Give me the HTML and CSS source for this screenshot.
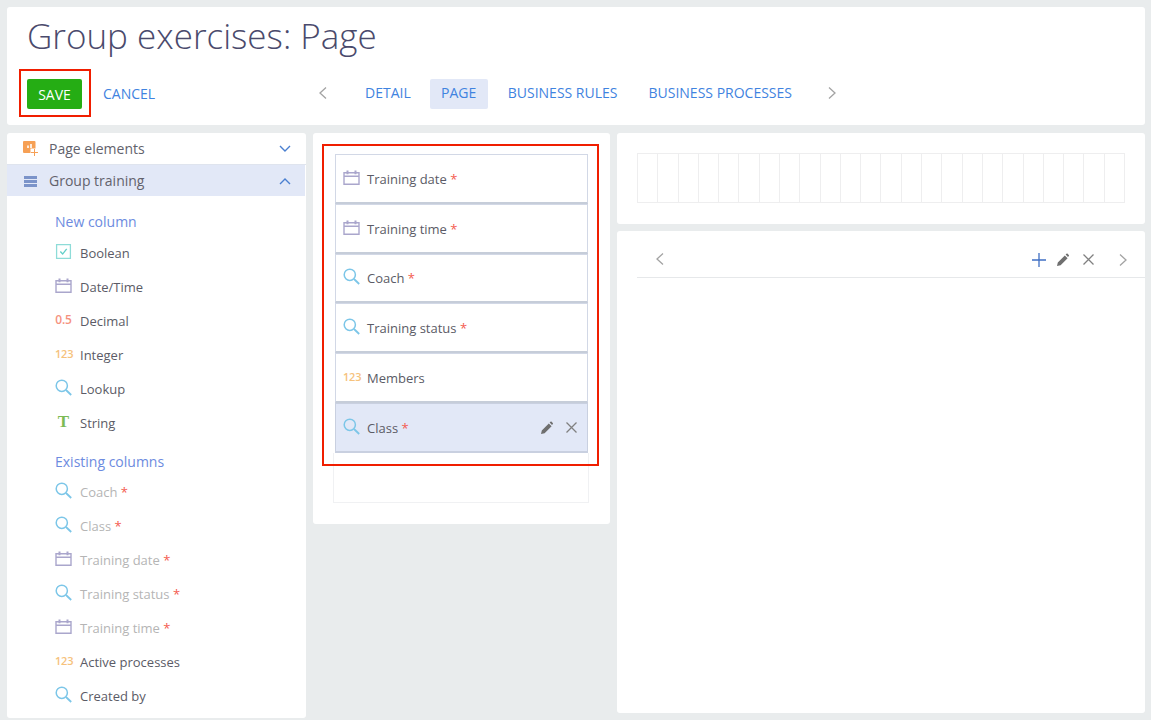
FILE: index.html
```html
<!DOCTYPE html>
<html lang="en">
<head>
<meta charset="utf-8">
<title>Group exercises: Page</title>
<link rel="stylesheet" href="styles.css">
</head>
<body>
<svg class="defs" width="0" height="0" aria-hidden="true">
  <symbol id="cal" viewBox="0 0 17 16"><path d="M1 3.2h15v11.6H1zM1 6.8h15" fill="none" stroke="#aaa6cc" stroke-width="1.4"/><path d="M4.5 1v3.8M12.5 1v3.8" stroke="#aaa6cc" stroke-width="2"/></symbol>
  <symbol id="mag" viewBox="0 0 17 17"><circle cx="6.8" cy="6.8" r="5.6" fill="none" stroke="#7cc6e8" stroke-width="1.5"/><path d="M11 11l5.2 5" stroke="#7cc6e8" stroke-width="1.8"/></symbol>
  <symbol id="pen" viewBox="0 0 14 14"><path d="M1 13l.8-3.6 7-7 2.8 2.8-7 7zM9.6 1.6l.9-.8c.4-.3.8-.3 1.1 0l1.2 1.2c.3.3.3.7 0 1.1l-.8.9z" fill="#6f6f6f"/></symbol>
  <symbol id="cross" viewBox="0 0 13 13"><path d="M1.5 1.5l10 10M11.5 1.5l-10 10" stroke="#808080" stroke-width="1.3" fill="none"/></symbol>
  <symbol id="left" viewBox="0 0 9 14"><path d="M8 1.5L2 7l6 5.5" fill="none" stroke="#a3a3a3" stroke-width="1.3"/></symbol>
  <symbol id="right" viewBox="0 0 9 14"><path d="M1 1.5L7 7l-6 5.5" fill="none" stroke="#a3a3a3" stroke-width="1.3"/></symbol>
</svg>

<div class="page">
  <header class="card head">
    <h1 class="title">Group exercises: Page</h1>
    <div class="toolbar">
      <button class="save">SAVE</button>
      <a class="cancel">CANCEL</a>
      <nav class="tabs">
        <svg class="arrow arrow-up"><use href="#left"/></svg>
        <a class="tab tab-detail">DETAIL</a>
        <a class="tab tab-on">PAGE</a>
        <a class="tab tab-rules">BUSINESS RULES</a>
        <a class="tab tab-proc">BUSINESS PROCESSES</a>
        <svg class="arrow arrow-up arrow-r"><use href="#right"/></svg>
      </nav>
    </div>
    <div class="mark mark-save"></div>
  </header>

  <div class="body">
    <aside class="card side">
      <div class="acc">
        <svg class="acc-ic" viewBox="0 0 16 16"><rect x="0" y="0" width="12.5" height="12" rx="1" fill="#f6a055"/><path d="M5 7V4.5M8 7V3" stroke="#fff" stroke-width="1.6"/><rect x="7.5" y="7.5" width="8" height="8" fill="#fff"/><path d="M11.5 8v7M8 11.5h7" stroke="#f6a055" stroke-width="1"/></svg>
        <span class="acc-t">Page elements</span>
        <svg class="chev" viewBox="0 0 12 8"><path d="M1 1l5 5 5-5" fill="none" stroke="#4a7fd0" stroke-width="1.4"/></svg>
      </div>
      <div class="acc acc-on">
        <svg class="acc-ic" viewBox="0 0 16 16"><path d="M1 3h13v3H1zM1 7h13v3H1zM1 11h13v3H1z" fill="#7b93c9"/></svg>
        <span class="acc-t">Group training</span>
        <svg class="chev" viewBox="0 0 12 8"><path d="M1 7l5-5 5 5" fill="none" stroke="#4a7fd0" stroke-width="1.4"/></svg>
      </div>

      <h3 class="sec sec-a">New column</h3>
      <ul class="list list-a">
        <li class="it"><svg class="ic" viewBox="0 0 16 16"><path d="M1.5 1.5h13v13h-13z" fill="none" stroke="#8edcd8" stroke-width="1.2"/><path d="M5 8l2.2 2.4L11 5.5" fill="none" stroke="#63cfc9" stroke-width="1.3"/></svg>Boolean</li>
        <li class="it"><svg class="ic"><use href="#cal"/></svg>Date/Time</li>
        <li class="it"><span class="ic num num-r">0.5</span>Decimal</li>
        <li class="it"><span class="ic num">123</span>Integer</li>
        <li class="it"><svg class="ic"><use href="#mag"/></svg>Lookup</li>
        <li class="it"><span class="ic tee">T</span>String</li>
      </ul>

      <h3 class="sec sec-b">Existing columns</h3>
      <ul class="list list-b">
        <li class="it off"><svg class="ic"><use href="#mag"/></svg>Coach <i class="req">*</i></li>
        <li class="it off"><svg class="ic"><use href="#mag"/></svg>Class <i class="req">*</i></li>
        <li class="it off"><svg class="ic"><use href="#cal"/></svg>Training date <i class="req">*</i></li>
        <li class="it off"><svg class="ic"><use href="#mag"/></svg>Training status <i class="req">*</i></li>
        <li class="it off"><svg class="ic"><use href="#cal"/></svg>Training time <i class="req">*</i></li>
        <li class="it"><span class="ic num">123</span>Active processes</li>
        <li class="it"><svg class="ic"><use href="#mag"/></svg>Created by</li>
      </ul>
    </aside>

    <main class="card mid">
      <div class="row"><svg class="ic"><use href="#cal"/></svg>Training date <i class="req">*</i></div>
      <div class="row"><svg class="ic"><use href="#cal"/></svg>Training time <i class="req">*</i></div>
      <div class="row"><svg class="ic"><use href="#mag"/></svg>Coach <i class="req">*</i></div>
      <div class="row"><svg class="ic"><use href="#mag"/></svg>Training status <i class="req">*</i></div>
      <div class="row"><span class="ic num">123</span>Members</div>
      <div class="row row-on"><svg class="ic"><use href="#mag"/></svg>Class <i class="req">*</i>
        <span class="row-act"><svg class="act-pen"><use href="#pen"/></svg><svg class="act-x"><use href="#cross"/></svg></span>
      </div>
      <div class="row-empty"></div>
      <div class="mark mark-rows"></div>
    </main>

    <section class="right">
      <div class="card grid-card">
        <div class="grid">
          <b></b><b></b><b></b><b></b><b></b><b></b><b></b><b></b><b></b><b></b><b></b><b></b>
          <b></b><b></b><b></b><b></b><b></b><b></b><b></b><b></b><b></b><b></b><b></b><b></b>
        </div>
      </div>
      <div class="card detail">
        <div class="detail-bar">
          <svg class="arrow arrow-prev"><use href="#left"/></svg>
          <svg class="plus" viewBox="0 0 14 14"><path d="M7 0v14M0 7h14" stroke="#3f6fc4" stroke-width="1.3"/></svg>
          <svg class="act-pen"><use href="#pen"/></svg>
          <svg class="act-x"><use href="#cross"/></svg>
          <svg class="arrow arrow-end"><use href="#right"/></svg>
        </div>
      </div>
    </section>
  </div>
</div>
</body>
</html>
```
FILE: styles.css
```css
* { box-sizing: border-box; }
html, body { margin: 0; height: 100%; overflow: hidden; }
body { background: #e9eced; font-family: "Open Sans", "Noto Sans", sans-serif; font-size: 13px; color: #5b5b66; }
.defs { position: absolute; }
.page { width: 1151px; height: 720px; padding: 7px 6px 0 7px; display: flex; flex-direction: column; gap: 8px; }
.card { background: #fff; border-radius: 3px; }
.head { position: relative; height: 118px; padding: 7px 20px 0; flex: none; }
.title { margin: 0; font-size: 35px; line-height: 44px; font-weight: 300; color: #4a4a6c; }
.toolbar { display: flex; align-items: center; margin-top: 21px; height: 30px; }
.save { width: 55px; height: 30px; border: 0; border-radius: 2px; background: #25ad14; color: #fff; font: 400 14px "Open Sans", sans-serif; padding: 0; flex: none; }
.cancel { margin-left: 21px; width: 52px; padding-bottom: 2px; color: #3f83e0; font-size: 14px; white-space: nowrap; }
.tabs { display: flex; align-items: center; margin-left: 163px; height: 30px; }
.arrow { width: 9px; height: 14px; flex: none; }
.arrow-up { margin-top: -2px; }
.tab { color: #3f83e0; font-size: 14px; line-height: 28px; padding-bottom: 2px; border-radius: 2px; white-space: nowrap; }
.tab-detail { margin-left: 38px; }
.tab-on { margin-left: 19px; width: 58px; text-align: center; background: #e2e8f7; }
.tab-rules { margin-left: 20px; }
.tab-proc { margin-left: 31px; }
.arrow-r { margin-left: 36px; }
.mark { position: absolute; border: 2px solid #f01e00; pointer-events: none; }
.mark-save { left: 12px; top: 62px; width: 72px; height: 48px; }
.body { flex: 1; display: flex; gap: 7px; min-height: 0; }
.side { width: 299px; height: 585px; flex: none; overflow: hidden; }
.acc { display: flex; align-items: center; height: 32px; padding: 0 15px 0 16px; border-bottom: 1px solid #dfe4ee; }
.acc-on { height: 31px; background: #e2e8f7; border-bottom: 0; margin-right: 1px; padding-right: 14px; }
.acc-ic { width: 16px; height: 16px; flex: none; }
.acc-t { margin-left: 10px; font-size: 14px; color: #62626c; flex: 1; }
.chev { width: 12px; height: 8px; }
.sec { margin: 0; padding-left: 48px; font-size: 14px; font-weight: 400; line-height: 20px; color: #6d8be0; }
.sec-a { margin-top: 16px; }
.sec-b { margin-top: 12px; }
.list { list-style: none; margin: 0; padding: 0 0 0 48px; }
.list-a { margin-top: 4px; }
.list-b { margin-top: 3px; }
.it { display: flex; align-items: center; height: 34px; white-space: pre; }
.ic { width: 17px; height: 17px; flex: none; margin-right: 8px; margin-top: -3px; }
.num { font-size: 11px; font-weight: 600; color: #f6c27c; line-height: 17px; text-align: center; letter-spacing: -0.2px; }
.num-r { color: #f5927f; font-size: 12px; }
.tee { font: 700 17px/17px "Liberation Serif", serif; color: #7cbb55; text-align: center; }
.off { color: #b5b5b5; }
.req { color: #f45b4f; font-style: normal; }
.mid { position: relative; width: 297px; height: 391px; padding: 21px 21px 0 20px; flex: none; }
.row { display: flex; align-items: center; height: 49.8px; margin: 0 1px 0 2px; padding: 1px 0 0 7px; white-space: pre; border: 1px solid #d2d8e6; border-bottom: 2px solid #c6cdd9; }
.row .ic { margin-right: 7px; }
.row-on { background: #e2e8f7; border-color: #c9d0e0; }
.row-act { margin-left: auto; display: flex; align-items: center; gap: 11px; padding-right: 9px; }
.act-pen { width: 14px; height: 14px; flex: none; }
.act-x { width: 13px; height: 13px; flex: none; }
.row-empty { height: 50px; border: 1px solid #f0f1f3; border-top: 0; }
.mark-rows { left: 9px; top: 11px; width: 277px; height: 322px; }
.right { flex: 1; display: flex; flex-direction: column; gap: 7px; min-width: 0; }
.grid-card { height: 91px; padding: 20px 20px 0; flex: none; }
.grid { display: grid; grid-template-columns: repeat(24, 1fr); height: 50px; border-left: 1px solid #eeeeef; border-top: 1px solid #eeeeef; border-bottom: 1px solid #eeeeef; }
.grid b { border-right: 1px solid #eeeeef; }
.detail { height: 482px; padding: 0 0 0 20px; flex: none; }
.detail-bar { display: flex; align-items: center; height: 47px; padding: 11px 17px 0 18px; border-bottom: 1px solid #e6e8ea; }
.arrow-prev { margin-top: -2px; }
.plus { width: 14px; height: 14px; margin-left: auto; margin-right: 10px; flex: none; }
.detail-bar .act-pen { margin-right: 12px; }
.arrow-end { margin-left: 24px; }
```
